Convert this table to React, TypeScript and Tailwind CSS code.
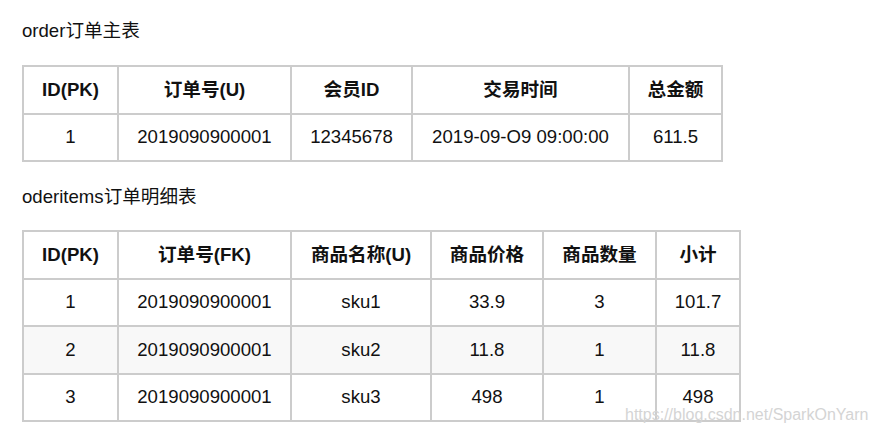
const orderHead = [
  { label: 'ID(PK)', w: 'w-[95px]' },
  { label: '订单号(U)', w: 'w-[173px]' },
  { label: '会员ID', w: 'w-[121px]' },
  { label: '交易时间', w: 'w-[217px]' },
  { label: '总金额', w: 'w-[93px]' },
];

const orderRows = [['1', '2019090900001', '12345678', '2019-09-O9 09:00:00', '611.5']];

const itemHead = [
  { label: 'ID(PK)', w: 'w-[95px]' },
  { label: '订单号(FK)', w: 'w-[173px]' },
  { label: '商品名称(U)', w: 'w-[140px]' },
  { label: '商品价格', w: 'w-[112px]' },
  { label: '商品数量', w: 'w-[113px]' },
  { label: '小计', w: 'w-[84px]' },
];

const itemRows = [
  ['1', '2019090900001', 'sku1', '33.9', '3', '101.7'],
  ['2', '2019090900001', 'sku2', '11.8', '1', '11.8'],
  ['3', '2019090900001', 'sku3', '498', '1', '498'],
];

const DataTable = ({ head, rows }: { head: { label: string; w: string }[]; rows: string[][] }) => {
  return (
    <table className="table-fixed border-collapse border-2 border-[#cccccc]">
      <thead>
        <tr className="bg-white">
          {head.map((h) => (
            <th key={h.label} className={`${h.w} h-[47.5px] border-2 border-[#cccccc] p-0 text-center font-bold`}>
              {h.label}
            </th>
          ))}
        </tr>
      </thead>
      <tbody>
        {rows.map((r, i) => (
          <tr key={i} className={i % 2 === 1 ? 'bg-[#f8f8f8]' : 'bg-white'}>
            {r.map((c, j) => (
              <td key={j} className="h-[47.5px] border-2 border-[#cccccc] p-0 text-center">
                {c}
              </td>
            ))}
          </tr>
        ))}
      </tbody>
    </table>
  );
};

export default function App() {
  return (
    <div
      className="relative w-[875px] h-[434px] overflow-hidden bg-white pt-[19px] pl-[22px] text-[18.6px] text-[#111111]"
      style={{ fontFamily: '"Liberation Sans", "Noto Sans CJK SC", sans-serif' }}
    >
      <div className="h-[24px] leading-[24px] mb-[22px]">order订单主表</div>
      <DataTable head={orderHead} rows={orderRows} />

      <div className="h-[24px] leading-[24px] mt-[23px] mb-[21px]">oderitems订单明细表</div>
      <DataTable head={itemHead} rows={itemRows} />

      {/* watermark */}
      <div className="absolute left-[625px] top-[405px] text-[16px] leading-[20px] text-[#d4d4d4]">
        https://blog.csdn.net/SparkOnYarn
      </div>
    </div>
  );
}
